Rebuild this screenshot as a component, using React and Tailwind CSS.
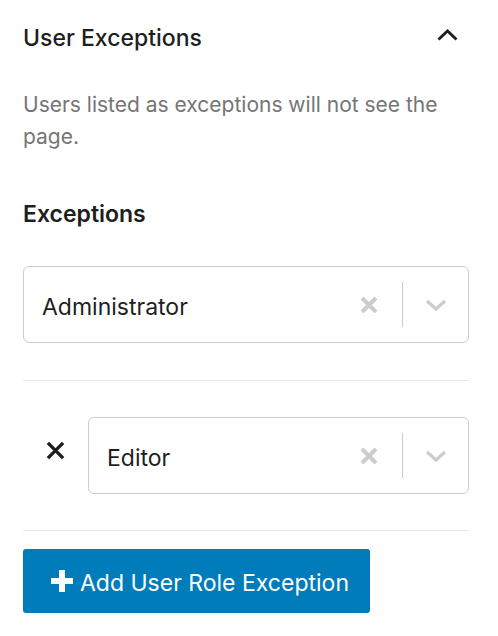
import React, { useState } from 'react';

const ClearIcon = () => (
    <svg width="20" height="20" viewBox="0 0 20 20">
        <path d="M3 3l14 14M17 3 3 17" stroke="currentColor" strokeWidth="4" />
    </svg>
);

const ChevronDown = () => (
    <svg width="22" height="12" viewBox="0 0 22 12">
        <path d="M2 2l9 8 9-8" fill="none" stroke="currentColor" strokeWidth="3.2" />
    </svg>
);

// react-select style single value picker
const RoleSelect = ({ value, onClear }) => (
    <div className="flex-1 flex items-center h-[77px] border border-[#cccccc] rounded-[6px] bg-white">
        <div className="flex-1 pl-[18px] pt-[5px] text-[23px] text-[#1e1e1e]">{value}</div>
        <button type="button" onClick={onClear} className="text-[#cccccc] pr-[23px] flex items-center">
            <ClearIcon />
        </button>
        <span className="w-px h-[45px] bg-[#cccccc]" />
        <span className="text-[#cccccc] pl-[22px] pr-[21px] flex items-center">
            <ChevronDown />
        </span>
    </div>
);

const App = () => {
    const [open, setOpen] = useState(true);
    const [roles, setRoles] = useState(['Administrator', 'Editor']);

    return (
        <div className="w-[498px] min-h-[636px] bg-white pl-[23px] pr-[29px] pt-[22px] font-['Inter',sans-serif] text-[#1e1e1e]">
            {/* panel header */}
            <button
                type="button"
                onClick={() => setOpen(!open)}
                className="w-full flex items-center justify-between h-[32px]"
            >
                <span className="text-[23px] font-medium">User Exceptions</span>
                <svg width="21" height="12" viewBox="0 0 21 12" className="mr-[11px] -mt-[6px]">
                    <path d="M1.5 10.5 10.5 2l9 8.5" fill="none" stroke="#1e1e1e" strokeWidth="2.8" />
                </svg>
            </button>

            {open && (
                <>
                    <p className="mt-[35px] text-[21px] leading-[32px] text-[#757575] pr-[20px]">
                        Users listed as exceptions will not see the page.
                    </p>

                    <h3 className="mt-[47px] text-[23px] leading-[28px] font-semibold">Exceptions</h3>

                    <div className="mt-[38px] flex">
                        <RoleSelect value={roles[0]} onClear={() => {}} />
                    </div>

                    <div className="mt-[37px] border-t border-[#e8e8e8]" />

                    {roles.slice(1).map((role, i) => (
                        <div key={role} className="mt-[36px] flex items-center">
                            <button
                                type="button"
                                onClick={() => setRoles(roles.filter((_, j) => j !== i + 1))}
                                className="w-[65px] flex items-start pl-[23px] -mt-[10px]"
                            >
                                <svg width="19" height="19" viewBox="0 0 20 20">
                                    <path d="M2 2l16 16M18 2 2 18" stroke="#1e1e1e" strokeWidth="3.6" />
                                </svg>
                            </button>
                            <RoleSelect value={role} onClear={() => {}} />
                        </div>
                    ))}

                    <div className="mt-[36px] border-t border-[#e8e8e8]" />

                    <button
                        type="button"
                        className="mt-[18px] h-[64px] w-[347px] flex items-center justify-center gap-[7px] pl-[7px] pt-[4px] bg-[#007cba] text-white text-[23px] rounded-[3px]"
                    >
                        <svg width="22" height="22" viewBox="0 0 22 22" className="-mt-[5px]">
                            <path d="M11 0v22M0 11h22" stroke="white" strokeWidth="6" />
                        </svg>
                        Add User Role Exception
                    </button>
                </>
            )}
        </div>
    );
};

export default App;
